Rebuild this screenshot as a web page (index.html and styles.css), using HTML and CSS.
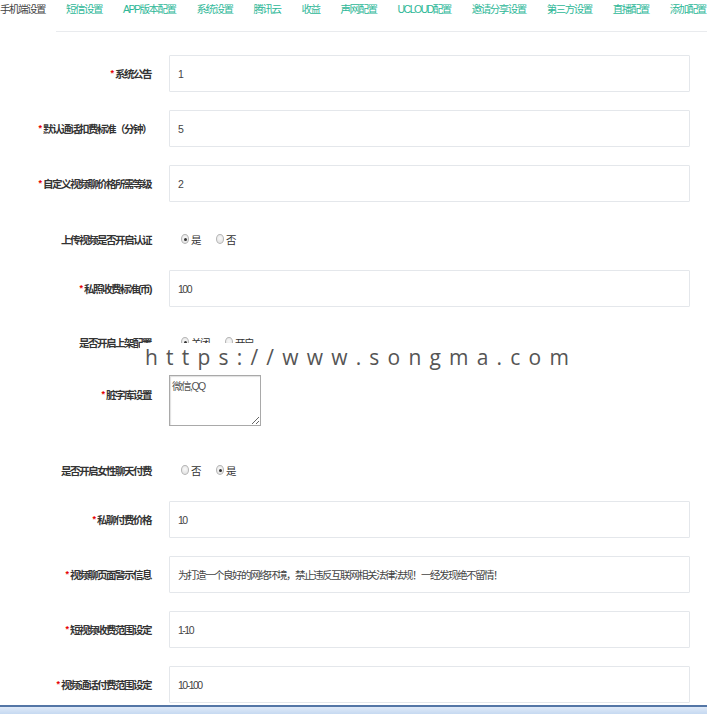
FILE: index.html
```html
<!DOCTYPE html>
<html lang="zh">
<head>
<meta charset="utf-8">
<title>手机端设置</title>
<link rel="stylesheet" href="styles.css">
</head>
<body>
<div class="tabs">
  <span class="tab active">手机端设置</span>
  <span class="tab">短信设置</span>
  <span class="tab">APP版本配置</span>
  <span class="tab">系统设置</span>
  <span class="tab">腾讯云</span>
  <span class="tab">收益</span>
  <span class="tab">声网配置</span>
  <span class="tab">UCLOUD配置</span>
  <span class="tab">邀请分享设置</span>
  <span class="tab">第三方设置</span>
  <span class="tab">直播配置</span>
  <span class="tab">添加配置</span>
</div>

<form class="form">
  <div class="row">
    <label class="label"><span class="req">*</span>系统公告</label>
    <input class="field" type="text" value="1">
  </div>
  <div class="row">
    <label class="label"><span class="req">*</span>默认通话扣费标准（分钟）</label>
    <input class="field" type="text" value="5">
  </div>
  <div class="row">
    <label class="label"><span class="req">*</span>自定义视频聊价格所需等级</label>
    <input class="field" type="text" value="2">
  </div>
  <div class="row radio-row">
    <label class="label">上传视频是否开启认证</label>
    <div class="radios">
      <span class="opt"><span class="dot checked"></span>是</span>
      <span class="opt"><span class="dot"></span>否</span>
    </div>
  </div>
  <div class="row">
    <label class="label"><span class="req">*</span>私照收费标准(币)</label>
    <input class="field" type="text" value="100">
  </div>
  <div class="row radio-row raised">
    <label class="label">是否开启上架配置</label>
    <div class="radios">
      <span class="opt"><span class="dot checked"></span>关闭</span>
      <span class="opt"><span class="dot"></span>开启</span>
    </div>
  </div>
  <div class="row area-row">
    <label class="label"><span class="req">*</span>脏字库设置</label>
    <textarea class="area">微信,QQ</textarea>
  </div>
  <div class="row radio-row">
    <label class="label">是否开启女性聊天付费</label>
    <div class="radios">
      <span class="opt"><span class="dot"></span>否</span>
      <span class="opt"><span class="dot checked"></span>是</span>
    </div>
  </div>
  <div class="row">
    <label class="label"><span class="req">*</span>私聊付费价格</label>
    <input class="field" type="text" value="10">
  </div>
  <div class="row">
    <label class="label"><span class="req">*</span>视频聊页面警示信息</label>
    <input class="field" type="text" value="为打造一个良好的网络环境，禁止违反互联网相关法律法规！一经发现绝不留情！">
  </div>
  <div class="row">
    <label class="label"><span class="req">*</span>短视频收费范围设定</label>
    <input class="field" type="text" value="1-10">
  </div>
  <div class="row">
    <label class="label"><span class="req">*</span>视频通话付费范围设定</label>
    <input class="field" type="text" value="10-100">
  </div>
</form>

<div class="watermark">https://www.songma.com</div>
<div class="statusbar"></div>
</body>
</html>
```

FILE: styles.css
```css
html, body {
  margin: 0;
  padding: 0;
  background: #fff;
  overflow: hidden;
}
body {
  font-family: "Liberation Sans", "Noto Sans CJK SC", sans-serif;
  font-size: 10.5px;
  letter-spacing: -1.5px;
  color: #333;
  height: 714px;
}

.tabs {
  display: flex;
  white-space: nowrap;
  margin-left: -10.5px;
  height: 31px;
  border-bottom: 1px solid #e9ebee;
}
.tab {
  padding: 0 10.5px;
  line-height: 18px;
  height: 32px;
  color: #2db797;
  flex: none;
}
.tab.active {
  color: #444;
  background: #fff;
}

.form {
  padding-top: 23px;
}
.row {
  display: flex;
  align-items: center;
  height: 37px;
  margin-bottom: 18px;
}
.label {
  width: 151px;
  margin-right: 18px;
  text-align: right;
  font-weight: bold;
  color: #333;
  flex: none;
}
.req {
  color: #e60000;
  font-size: 9px;
  vertical-align: 2px;
  margin-right: 1px;
  letter-spacing: 0;
}
.field {
  box-sizing: border-box;
  width: 521px;
  height: 37px;
  margin: 0;
  padding: 0 8px;
  border: 1px solid #e4e7eb;
  border-radius: 1px;
  font-family: inherit;
  font-size: 10.5px;
  letter-spacing: -1.5px;
  color: #444;
  background: #fff;
  outline: none;
}

.radio-row {
  height: 26px;
  padding-top: 6px;
}
.radio-row.raised {
  padding-top: 2px;
  height: 30px;
}
.radios {
  display: flex;
  gap: 16px;
  padding-left: 12px;
  color: #333;
}
.opt {
  display: flex;
  align-items: center;
  gap: 2px;
}
.dot {
  box-sizing: border-box;
  width: 8px;
  height: 10px;
  border-radius: 50%;
  border: 1px solid #b5b5b5;
  background: radial-gradient(circle at 50% 40%, #fafafa, #dcdcdc);
  position: relative;
}
.dot.checked::after {
  content: "";
  position: absolute;
  left: 1.5px;
  top: 2.5px;
  width: 3px;
  height: 3px;
  border-radius: 50%;
  background: #333;
}

.area-row {
  height: 51px;
  align-items: flex-start;
  margin-bottom: 25px;
}
.area-row .label {
  padding-top: 12px;
}
.area {
  box-sizing: border-box;
  width: 92px;
  height: 51px;
  margin: 0;
  padding: 2px;
  border: 1px solid #a9a9a9;
  font-family: inherit;
  font-size: 10.5px;
  letter-spacing: -1.5px;
  color: #555;
  resize: both;
  box-shadow: inset 1px 1px 1px #e0e0e0;
}

.watermark {
  position: absolute;
  left: 140px;
  top: 343px;
  padding: 2px 5px 0 5px;
  height: 24px;
  line-height: 24px;
  background: #fff;
  font-family: "Open Sans", "Liberation Sans", sans-serif;
  font-size: 21px;
  letter-spacing: 8.2px;
  color: #555;
  white-space: nowrap;
}

.statusbar {
  position: fixed;
  left: 0;
  right: 0;
  bottom: 0;
  height: 7px;
  border-top: 2px solid #5476a6;
  background: linear-gradient(#dfeaf8, #c6d9f1);
}
```
